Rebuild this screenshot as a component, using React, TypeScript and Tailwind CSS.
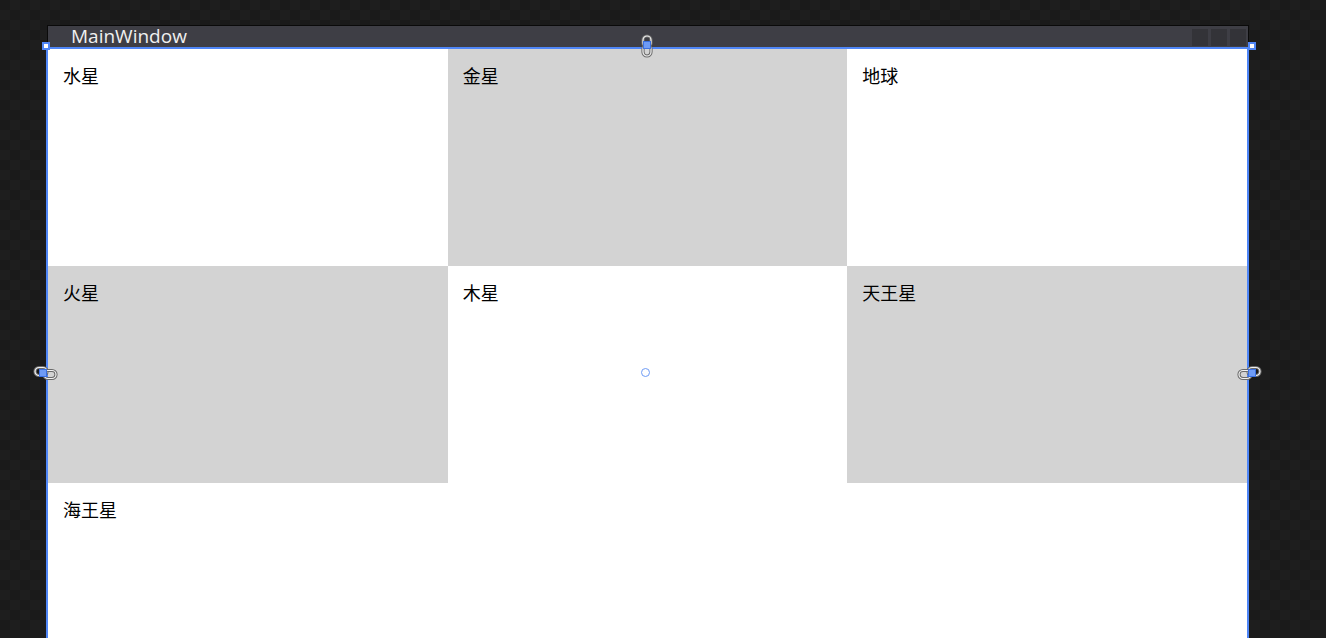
import React from "react";

const cells = [
  { name: "水星", shade: false },
  { name: "金星", shade: true },
  { name: "地球", shade: false },
  { name: "火星", shade: true },
  { name: "木星", shade: false },
  { name: "天王星", shade: true },
];

function Handle() {
  return <div className="w-[8px] h-[8px] bg-white border-2 border-[#4f86f7]" />;
}

function Ring({ x, y, w, h }: { x: number; y: number; w: number; h: number }) {
  const r = Math.min(w, h) / 2;
  return (
    <>
      <rect x={x} y={y} width={w} height={h} rx={r} fill="none" stroke="#6a6a6a" strokeWidth="3.2" />
      <rect x={x} y={y} width={w} height={h} rx={r} fill="none" stroke="#f2f2f2" strokeWidth="1.2" />
    </>
  );
}

function LinkV() {
  return (
    <svg width="14" height="24" viewBox="0 0 14 24">
      <Ring x={3} y={2} w={8} h={11} />
      <Ring x={3} y={11} w={8} h={11} />
      <rect x="3.5" y="7.5" width="7" height="7" fill="#6e9bf5" stroke="#3a6fe0" strokeWidth="1" />
    </svg>
  );
}

function LinkH({ flip }: { flip?: boolean }) {
  return (
    <svg width="26" height="16" viewBox="0 0 26 16" style={{ transform: flip ? "scaleX(-1)" : undefined }}>
      <Ring x={2} y={2.5} w={12} h={8} />
      <Ring x={11} y={5.5} w={12} h={8} />
      <rect x="6.5" y="4.5" width="7" height="7" fill="#6e9bf5" stroke="#3a6fe0" strokeWidth="1" />
    </svg>
  );
}

export default function App() {
  return (
    <div className="w-[1326px] h-[638px] overflow-hidden relative bg-[#1c1c1c] bg-[repeating-conic-gradient(#1e1e1e_0%_25%,#1a1a1a_0%_50%)] bg-[length:20px_20px] pt-[25px] pl-[46px]">
      <div className="w-[1203px] relative">
        {/* title bar */}
        <div className="h-[22px] ml-[1px] bg-[#3e3e45] border border-b-0 border-[#0a0a0a] flex items-center justify-between pl-[23px] pr-[2px]">
          <span className="text-[19px] leading-none text-[#f0f0f0] font-['Open_Sans',sans-serif] -mt-[1px]">MainWindow</span>
          <div className="flex gap-[3px] pt-[1px]">
            <div className="w-[16px] h-[17px] bg-[#333338]" />
            <div className="w-[16px] h-[17px] bg-[#333338]" />
            <div className="w-[16px] h-[17px] bg-[#333338]" />
          </div>
        </div>
        {/* content with selection frame */}
        <div className="bg-[#4f86f7] pt-[2px] px-[2px]">
          <div className="bg-white grid grid-cols-3 font-['Noto_Sans_CJK_SC','Noto_Sans',sans-serif] text-[18px] leading-none text-black">
            {cells.map((c) => (
              <div key={c.name} className={`h-[217px] pl-[15px] pt-[17px] ${c.shade ? "bg-[#d3d3d3]" : "bg-white"}`}>
                {c.name}
              </div>
            ))}
            <div className="col-span-3 h-[200px] pl-[15px] pt-[17px]">海王星</div>
          </div>
        </div>

        {/* designer adorners */}
        <div className="absolute left-[-4px] top-[17px]"><Handle /></div>
        <div className="absolute right-[-7px] top-[17px]"><Handle /></div>
        <div className="absolute left-[594px] top-[9px]"><LinkV /></div>
        <div className="absolute left-[-13px] top-[340px]"><LinkH /></div>
        <div className="absolute right-[-13px] top-[340px]"><LinkH flip /></div>
        <div className="absolute left-[595px] top-[343px] w-[9px] h-[9px] rounded-full border-[1.5px] border-[#6e9bf5] bg-white" />
      </div>
    </div>
  );
}
